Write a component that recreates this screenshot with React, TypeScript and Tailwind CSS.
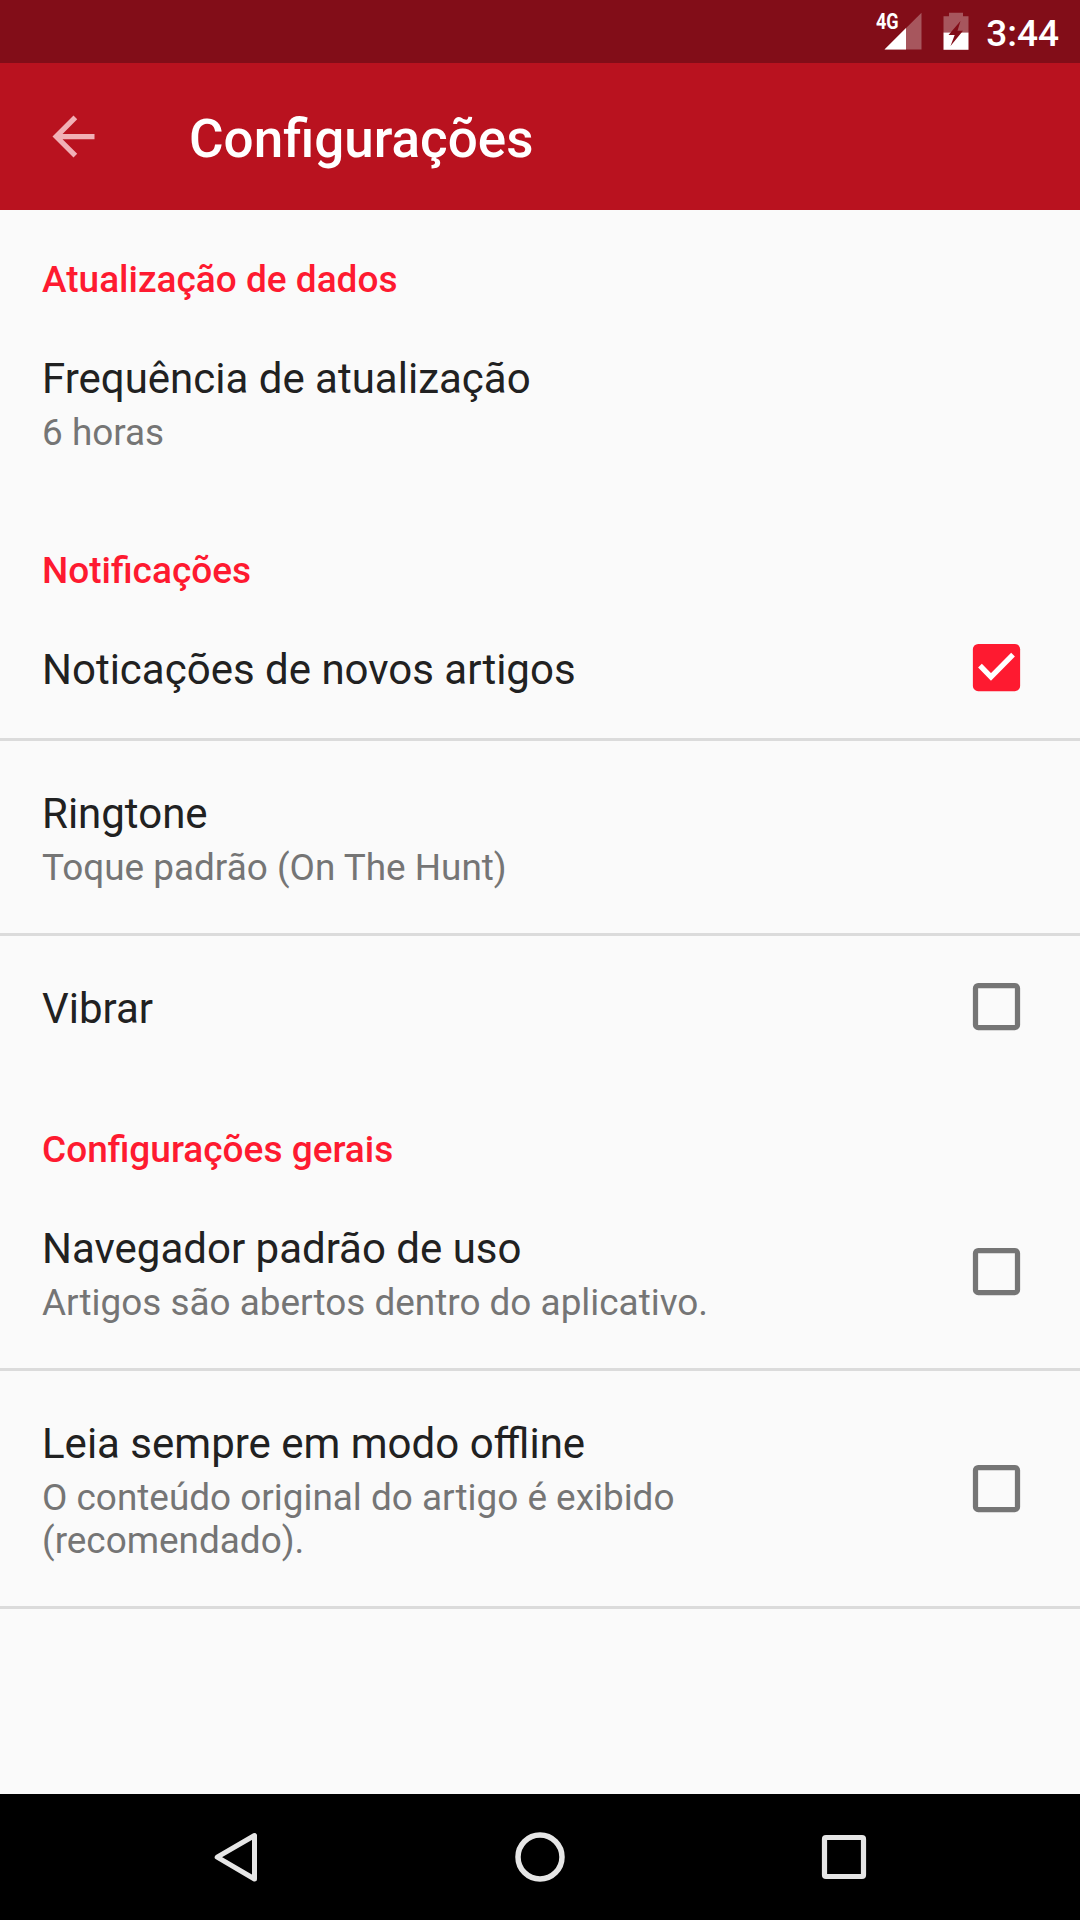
import { useState } from 'react';
import clsx from 'clsx';

type Preference = {
  id: string;
  title: string;
  summary?: string;
  checkbox?: boolean;
};

type Category = {
  title: string;
  items: Preference[];
};

const CATEGORIES: Category[] = [
  {
    title: 'Atualização de dados',
    items: [{ id: 'frequency', title: 'Frequência de atualização', summary: '6 horas' }],
  },
  {
    title: 'Notificações',
    items: [
      { id: 'notifications', title: 'Noticações de novos artigos', checkbox: true },
      { id: 'ringtone', title: 'Ringtone', summary: 'Toque padrão (On The Hunt)' },
      { id: 'vibrate', title: 'Vibrar', checkbox: true },
    ],
  },
  {
    title: 'Configurações gerais',
    items: [
      {
        id: 'browser',
        title: 'Navegador padrão de uso',
        summary: 'Artigos são abertos dentro do aplicativo.',
        checkbox: true,
      },
      {
        id: 'offline',
        title: 'Leia sempre em modo offline',
        summary: 'O conteúdo original do artigo é exibido (recomendado).',
        checkbox: true,
      },
    ],
  },
];

export default function App() {
  const [checked, setChecked] = useState<Record<string, boolean>>({ notifications: true });

  const toggle = (id: string) => setChecked(prev => ({ ...prev, [id]: !prev[id] }));

  return (
    <div className="flex h-[1920px] w-[1080px] flex-col overflow-hidden bg-[#fafafa] font-[Roboto,sans-serif]">
      <StatusBar />

      {/* Toolbar */}
      <header className="flex h-[147px] shrink-0 items-center bg-[#b9121f]">
        <button className="flex w-[147px] justify-center" aria-label="Voltar">
          <svg viewBox="0 0 24 24" className="size-[63px] fill-[#f1b0b6]">
            <path d="M20 11H7.83l5.59-5.59L12 4l-8 8 8 8 1.41-1.41L7.83 13H20v-2z" />
          </svg>
        </button>
        <h1 className="ml-[42px] pt-1 text-[53px] leading-[62px] font-medium text-white">Configurações</h1>
      </header>

      {/* Preference list */}
      <main className="flex-1">
        {CATEGORIES.map((category, i) => (
          <section key={category.title}>
            <h2 className="px-[42px] pt-12 pb-[5px] text-[37px] leading-[43px] font-medium text-[#fe1a30]">
              {category.title}
            </h2>
            {category.items.map((item, j) => (
              <PreferenceRow
                key={item.id}
                item={item}
                checked={!!checked[item.id]}
                divider={j < category.items.length - 1 || i === CATEGORIES.length - 1}
                onToggle={() => toggle(item.id)}
              />
            ))}
          </section>
        ))}
      </main>

      <NavigationBar />
    </div>
  );
}

function PreferenceRow({ item, checked, divider, onToggle }: {
  item: Preference;
  checked: boolean;
  divider: boolean;
  onToggle: () => void;
}) {
  return (
    <div
      className={clsx('flex items-center border-b-3 pr-[52.5px] pl-[42px]', divider ? 'border-[#dbdbdb]' : 'border-transparent')}
      onClick={item.checkbox ? onToggle : undefined}
    >
      <div className="flex-1 pt-12 pb-11">
        <div className="text-[42px] leading-[49px] text-[#212121]">{item.title}</div>
        {item.summary && (
          <div className="mt-2 max-w-[780px] text-[36.9px] leading-[43px] text-[#757575]">{item.summary}</div>
        )}
      </div>
      {item.checkbox && <Checkbox checked={checked} />}
    </div>
  );
}

function Checkbox({ checked }: { checked: boolean }) {
  return (
    <svg viewBox="0 0 24 24" className="mb-px ml-[42px] size-[63px] shrink-0" role="checkbox" aria-checked={checked}>
      {checked ? (
        <>
          <rect x="3" y="3" width="18" height="18" rx="2" fill="#fe1a30" />
          <path d="M5.7 11.3l4.2 4.3 8.4-8.500" fill="none" stroke="#fff" strokeWidth="2" />
        </>
      ) : (
        <rect x="4" y="4" width="16" height="16" rx="1" fill="none" stroke="#757575" strokeWidth="2" />
      )}
    </svg>
  );
}

function StatusBar() {
  return (
    <div className="flex h-[63px] shrink-0 justify-end bg-[#820d18] pr-[21px] text-white">
      <span className="mt-[11px] mr-[-20px] w-[28px] origin-left scale-x-[0.82] text-[22px] leading-[22px] font-bold">4G</span>
      {/* Signal strength */}
      <svg viewBox="0 0 38 38" className="mt-3 size-[38px]" fill="#fff">
        <path d="M0.5 37.5L37.5 0.7v36.8z" opacity="0.3" />
        <path d="M0.5 37.5L22 16v21.5z" />
      </svg>
      {/* Battery, charging */}
      <svg viewBox="0 0 26 38" className="mt-3 ml-[20.5px] h-[38px] w-[26px]">
        <path d="M6 .7h14v3.6h5.5v16.2H.5V4.3H6z" fill="#fff" opacity="0.3" />
        <path d="M.5 20.5h25v17.3H.5z" fill="#fff" />
        <path d="M17.5 9L5.5 23h6.2L7.500 34 20 18.700h-5.500z" fill="#820d18" />
      </svg>
      <span className="mt-[12px] ml-[17.5px] text-[37px] leading-[43px] font-medium">3:44</span>
    </div>
  );
}

function NavigationBar() {
  return (
    <nav className="flex h-[126px] shrink-0 items-center justify-center bg-black">
      <button className="flex w-[304px] justify-center" aria-label="Voltar">
        <svg viewBox="0 0 64 64" className="size-16" fill="none" stroke="#e6e6e6" strokeWidth="5" strokeLinejoin="round">
          <path d="M50.500 10.500v43.500L13.200 32.200z" />
        </svg>
      </button>
      <button className="flex w-[304px] justify-center" aria-label="Início">
        <svg viewBox="0 0 64 64" className="size-16" fill="none" stroke="#e6e6e6" strokeWidth="5.500">
          <circle cx="32" cy="32" r="22" />
        </svg>
      </button>
      <button className="flex w-[304px] justify-center" aria-label="Recentes">
        <svg viewBox="0 0 64 64" className="size-16" fill="none" stroke="#e6e6e6" strokeWidth="5.200">
          <rect x="12.500" y="12.500" width="39" height="39" rx="1.500" />
        </svg>
      </button>
    </nav>
  );
}
